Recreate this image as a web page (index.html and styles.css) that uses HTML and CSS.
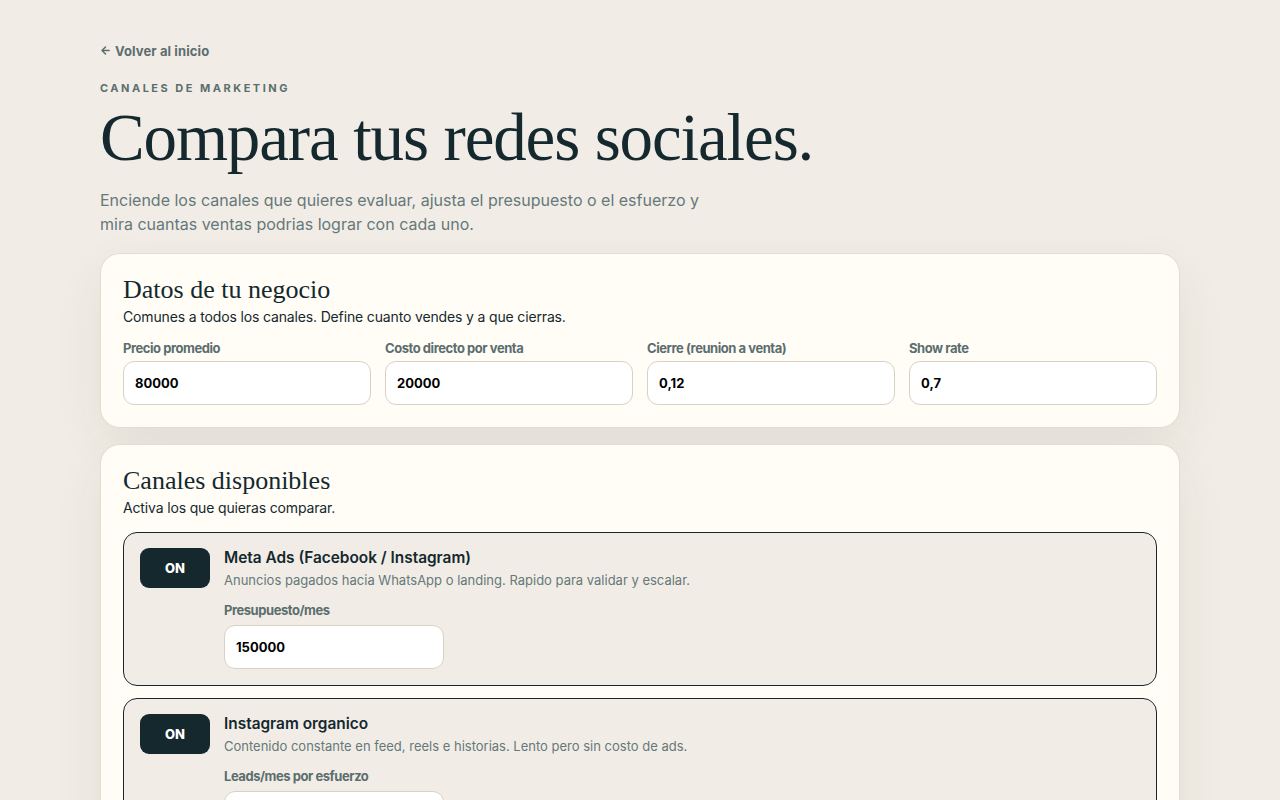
FILE: index.html
```html
<!DOCTYPE html>
<html lang="es">
<head>
<meta charset="utf-8">
<title>Compara tus redes sociales</title>
<link rel="stylesheet" href="styles.css">
</head>
<body>
<main class="page">
  <a class="back" href="#"><svg class="back-icon" viewBox="0 0 12 12" width="11" height="11"><path d="M10 6H2.5M6 2.2L2.2 6 6 9.8" fill="none" stroke="currentColor" stroke-width="1.6" stroke-linecap="round" stroke-linejoin="round"/></svg>Volver al inicio</a>
  <p class="eyebrow">CANALES DE MARKETING</p>
  <h1 class="title">Compara tus redes sociales.</h1>
  <p class="lead">Enciende los canales que quieres evaluar, ajusta el presupuesto o el esfuerzo y mira cuantas ventas podrias lograr con cada uno.</p>

  <section class="card">
    <h2 class="card-title">Datos de tu negocio</h2>
    <p class="card-sub">Comunes a todos los canales. Define cuanto vendes y a que cierras.</p>
    <div class="grid4">
      <label class="field"><span class="label">Precio promedio</span><input class="input" value="80000"></label>
      <label class="field"><span class="label">Costo directo por venta</span><input class="input" value="20000"></label>
      <label class="field"><span class="label">Cierre (reunion a venta)</span><input class="input" value="0,12"></label>
      <label class="field"><span class="label">Show rate</span><input class="input" value="0,7"></label>
    </div>
  </section>

  <section class="card">
    <h2 class="card-title">Canales disponibles</h2>
    <p class="card-sub">Activa los que quieras comparar.</p>
    <div class="channels">
      <div class="channel">
        <button class="toggle">ON</button>
        <div class="channel-body">
          <h3 class="channel-title">Meta Ads (Facebook / Instagram)</h3>
          <p class="channel-desc">Anuncios pagados hacia WhatsApp o landing. Rapido para validar y escalar.</p>
          <label class="field small"><span class="label">Presupuesto/mes</span><input class="input" value="150000"></label>
        </div>
      </div>
      <div class="channel">
        <button class="toggle">ON</button>
        <div class="channel-body">
          <h3 class="channel-title">Instagram organico</h3>
          <p class="channel-desc">Contenido constante en feed, reels e historias. Lento pero sin costo de ads.</p>
          <label class="field small"><span class="label">Leads/mes por esfuerzo</span><input class="input" value="40"></label>
        </div>
      </div>
    </div>
  </section>
</main>
</body>
</html>
```
FILE: styles.css
```css
* { box-sizing: border-box; }
html, body { margin: 0; padding: 0; }
body {
  background: #f1ede6;
  font-family: Inter, "Noto Sans", sans-serif;
  color: #14282e;
}
.page {
  width: 1080px;
  margin: 0 auto;
  padding: 40px 0 40px;
}
.back {
  display: inline-flex;
  align-items: center;
  gap: 4px;
  font-size: 13px;
  font-weight: 700;
  color: #5c6d6e;
  text-decoration: none;
  line-height: 18px;
  letter-spacing: 0.1px;
}
.back-icon { display: block; }
.eyebrow {
  margin: 21px 0 0;
  font-size: 11px;
  font-weight: 700;
  letter-spacing: 2.5px;
  color: #5c6d6e;
  line-height: 14px;
}
.title {
  margin: 2px 0 0;
  font-family: "Liberation Serif", "DejaVu Serif", serif;
  font-weight: 400;
  font-size: 67px;
  line-height: 80px;
  letter-spacing: -1.15px;
  color: #14282e;
}
.lead {
  margin: 11px 0 0;
  width: 620px;
  font-size: 16px;
  line-height: 24px;
  color: #66787a;
}
.card {
  margin-top: 17px;
  background: #fffdf6;
  border: 1px solid #e2ddd0;
  border-radius: 20px;
  padding: 21px 22px 22px;
  box-shadow: 0 18px 50px rgba(60, 50, 30, 0.07);
}
.card + .card { margin-top: 16px; }
.card-title {
  margin: 0;
  font-family: "Liberation Serif", "DejaVu Serif", serif;
  font-weight: 400;
  font-size: 26px;
  line-height: 30px;
  color: #14282e;
}
.card-sub {
  margin: 3px 0 0;
  font-size: 14px;
  line-height: 18px;
  letter-spacing: -0.15px;
  color: #14282e;
}
.grid4 {
  margin-top: 14px;
  display: grid;
  grid-template-columns: repeat(4, 1fr);
  gap: 14px;
}
.field { display: flex; flex-direction: column; gap: 5px; }
.label {
  font-size: 13px;
  font-weight: 700;
  line-height: 16px;
  color: #5c6d6e;
  letter-spacing: -0.45px;
}
.input {
  height: 44px;
  border: 1px solid #d8d2c6;
  border-radius: 11px;
  background: #fff;
  padding: 0 11px;
  font-family: Inter, "Noto Sans", sans-serif;
  font-size: 13px;
  font-weight: 700;
  color: #000;
  width: 100%;
}
.small { width: 220px; }
.channels {
  margin-top: 15px;
  display: flex;
  flex-direction: column;
  gap: 12px;
}
.channel {
  display: flex;
  gap: 14px;
  align-items: flex-start;
  background: #f1ede6;
  border: 1px solid #14282e;
  border-radius: 14px;
  padding: 15px 16px 16px;
}
.toggle {
  width: 70px;
  height: 40px;
  flex: none;
  border: none;
  border-radius: 9px;
  background: #14282e;
  color: #fff;
  font-family: Inter, "Noto Sans", sans-serif;
  font-weight: 800;
  font-size: 13px;
}
.channel-body { display: flex; flex-direction: column; }
.channel-title {
  margin: 0;
  font-size: 15.4px;
  font-weight: 600;
  line-height: 20px;
  color: #14282e;
}
.channel-desc {
  margin: 3px 0 0;
  font-size: 13px;
  line-height: 18px;
  color: #66787a;
}
.channel-body .field { margin-top: 13px; gap: 7px; }
```
